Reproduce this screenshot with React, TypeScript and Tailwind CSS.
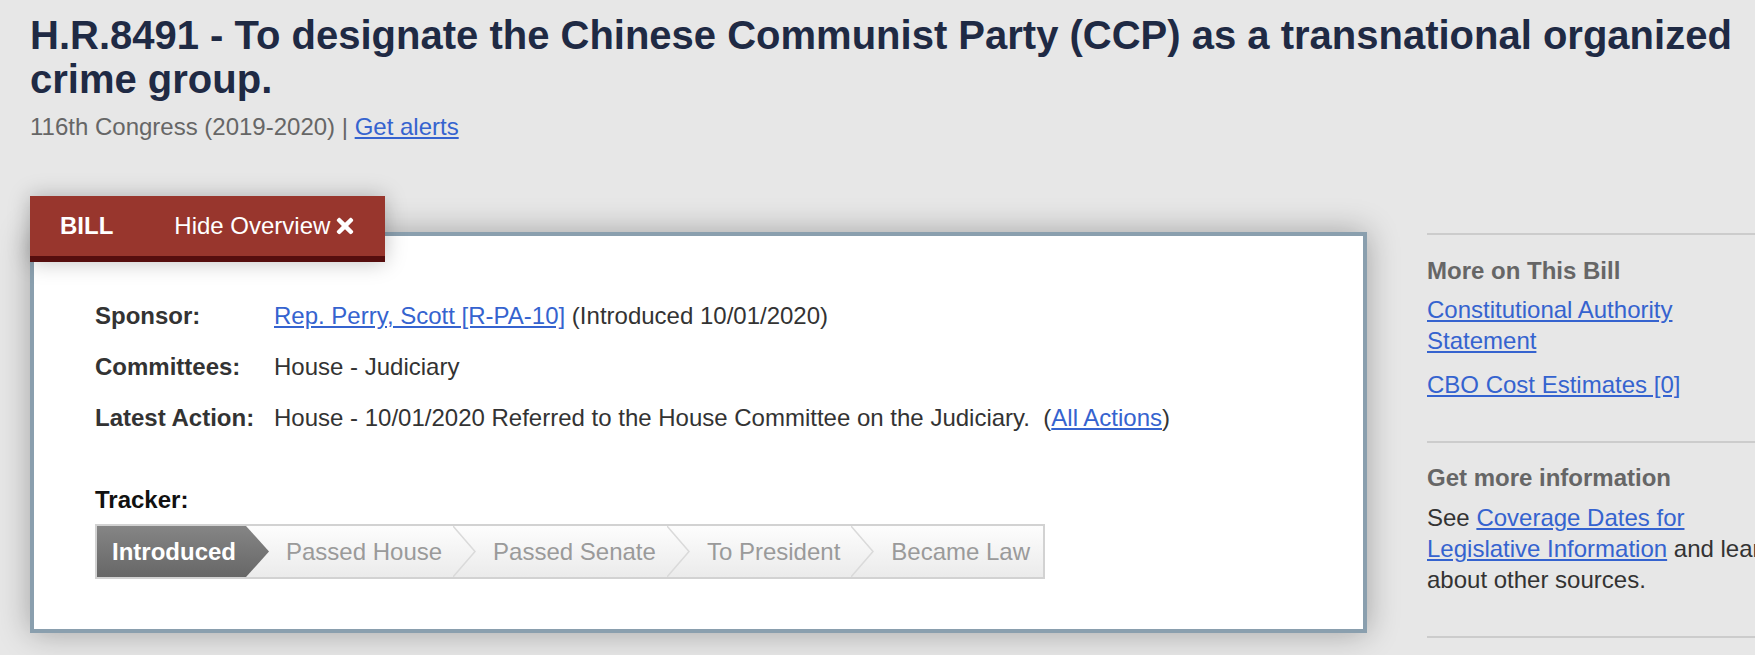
import React from 'react'
import { FaTimes } from 'react-icons/fa'

const font = { fontFamily: '"Liberation Sans", Arial, sans-serif' }

// light chevron between tracker steps
const Chevron = () => (
  <svg width="23" height="51" viewBox="0 0 23 51" className="shrink-0">
    <polyline points="0,0 22,25.5 0,51" fill="none" stroke="#dadada" strokeWidth="1.5" />
  </svg>
)

const steps = ['Passed House', 'Passed Senate', 'To President', 'Became Law']

const App = () => {
  return (
    <div style={font} className="min-h-screen w-full overflow-hidden bg-[#e7e7e7] pl-[30px] pt-[13px]">
      <h1 className="pr-[20px] text-[40px] font-bold leading-[44px] text-[#1f2a44]">
        H.R.8491 - To designate the Chinese Communist Party (CCP) as a transnational organized crime group.
      </h1>
      <p className="mt-[8px] text-[24px] leading-[36px] text-[#666]">
        116th Congress (2019-2020) | <a href="#" className="text-[#3563cf] underline">Get alerts</a>
      </p>

      <div className="mt-[51px] flex items-start gap-[60px]">
        {/* overview */}
        <div className="w-[1337px] shrink-0">
          <div className="relative z-10 flex h-[66px] w-[355px] items-center border-b-[6px] border-[#560e0e] bg-[#98362d] pl-[30px] text-[24px] text-white shadow-[0_0_20px_rgba(0,0,0,0.25)]">
            <span className="font-bold">BILL</span>
            <span className="ml-[61px] flex items-center">
              Hide Overview
              <FaTimes className="ml-[6px] h-[24px] w-[18px]" />
            </span>
          </div>

          <div className="-mt-[30px] border-4 border-[#8a9fae] bg-white pb-[50px] pl-[61px] pt-[62px] text-[24px] leading-[36px] text-[#333] shadow-[0_0_30px_rgba(0,0,0,0.3)]">
            <div className="grid grid-cols-[179px_1fr] gap-y-[15px]">
              <span className="font-bold">Sponsor:</span>
              <span>
                <a href="#" className="text-[#3563cf] underline">Rep. Perry, Scott [R-PA-10]</a> (Introduced 10/01/2020)
              </span>
              <span className="font-bold">Committees:</span>
              <span>House - Judiciary</span>
              <span className="font-bold">Latest Action:</span>
              <span>
                House - 10/01/2020 Referred to the House Committee on the Judiciary.&nbsp; (
                <a href="#" className="text-[#3563cf] underline">All Actions</a>)
              </span>
            </div>

            <div className="mt-[46px] font-bold text-[#111]">Tracker:</div>
            <div className="mt-[6px] flex h-[55px] w-[950px] items-center border-2 border-[#d2d2d2] bg-gradient-to-b from-[#fdfdfd] to-[#ebebeb] text-[#9a9a9a]">
              <div className="flex h-full items-center bg-gradient-to-b from-[#858585] to-[#676767] pl-[15px] pr-[10px] font-bold text-white">
                Introduced
              </div>
              <svg width="23" height="51" viewBox="0 0 23 51" className="shrink-0">
                <defs>
                  <linearGradient id="dark" x1="0" y1="0" x2="0" y2="1">
                    <stop offset="0" stopColor="#858585" />
                    <stop offset="1" stopColor="#676767" />
                  </linearGradient>
                </defs>
                <polygon points="0,0 23,25.5 0,51" fill="url(#dark)" />
              </svg>
              {steps.map((s, i) => (
                <React.Fragment key={s}>
                  <span className="whitespace-nowrap pl-[17px] pr-[11px]">{s}</span>
                  {i < steps.length - 1 && <Chevron />}
                </React.Fragment>
              ))}
            </div>
          </div>
        </div>

        {/* sidebar */}
        <div className="mt-[37px] w-[350px] shrink-0 text-[24px] leading-[31px] text-[#333]">
          <div className="border-t-2 border-[#cccccc] pb-[41px] pt-[20px]">
            <h2 className="font-bold text-[#666]">More on This Bill</h2>
            <p className="mt-[8px]">
              <a href="#" className="text-[#3563cf] underline">Constitutional Authority Statement</a>
            </p>
            <p className="mt-[13px]">
              <a href="#" className="text-[#3563cf] underline">CBO Cost Estimates [0]</a>
            </p>
          </div>
          <div className="border-t-2 border-[#cccccc] pb-[41px] pt-[19px]">
            <h2 className="font-bold text-[#666]">Get more information</h2>
            <p className="mt-[9px]">
              See <a href="#" className="text-[#3563cf] underline">Coverage Dates for Legislative Information</a> and learn about other sources.
            </p>
          </div>
          <div className="border-t-2 border-[#cccccc]" />
        </div>
      </div>
    </div>
  )
}

export default App
